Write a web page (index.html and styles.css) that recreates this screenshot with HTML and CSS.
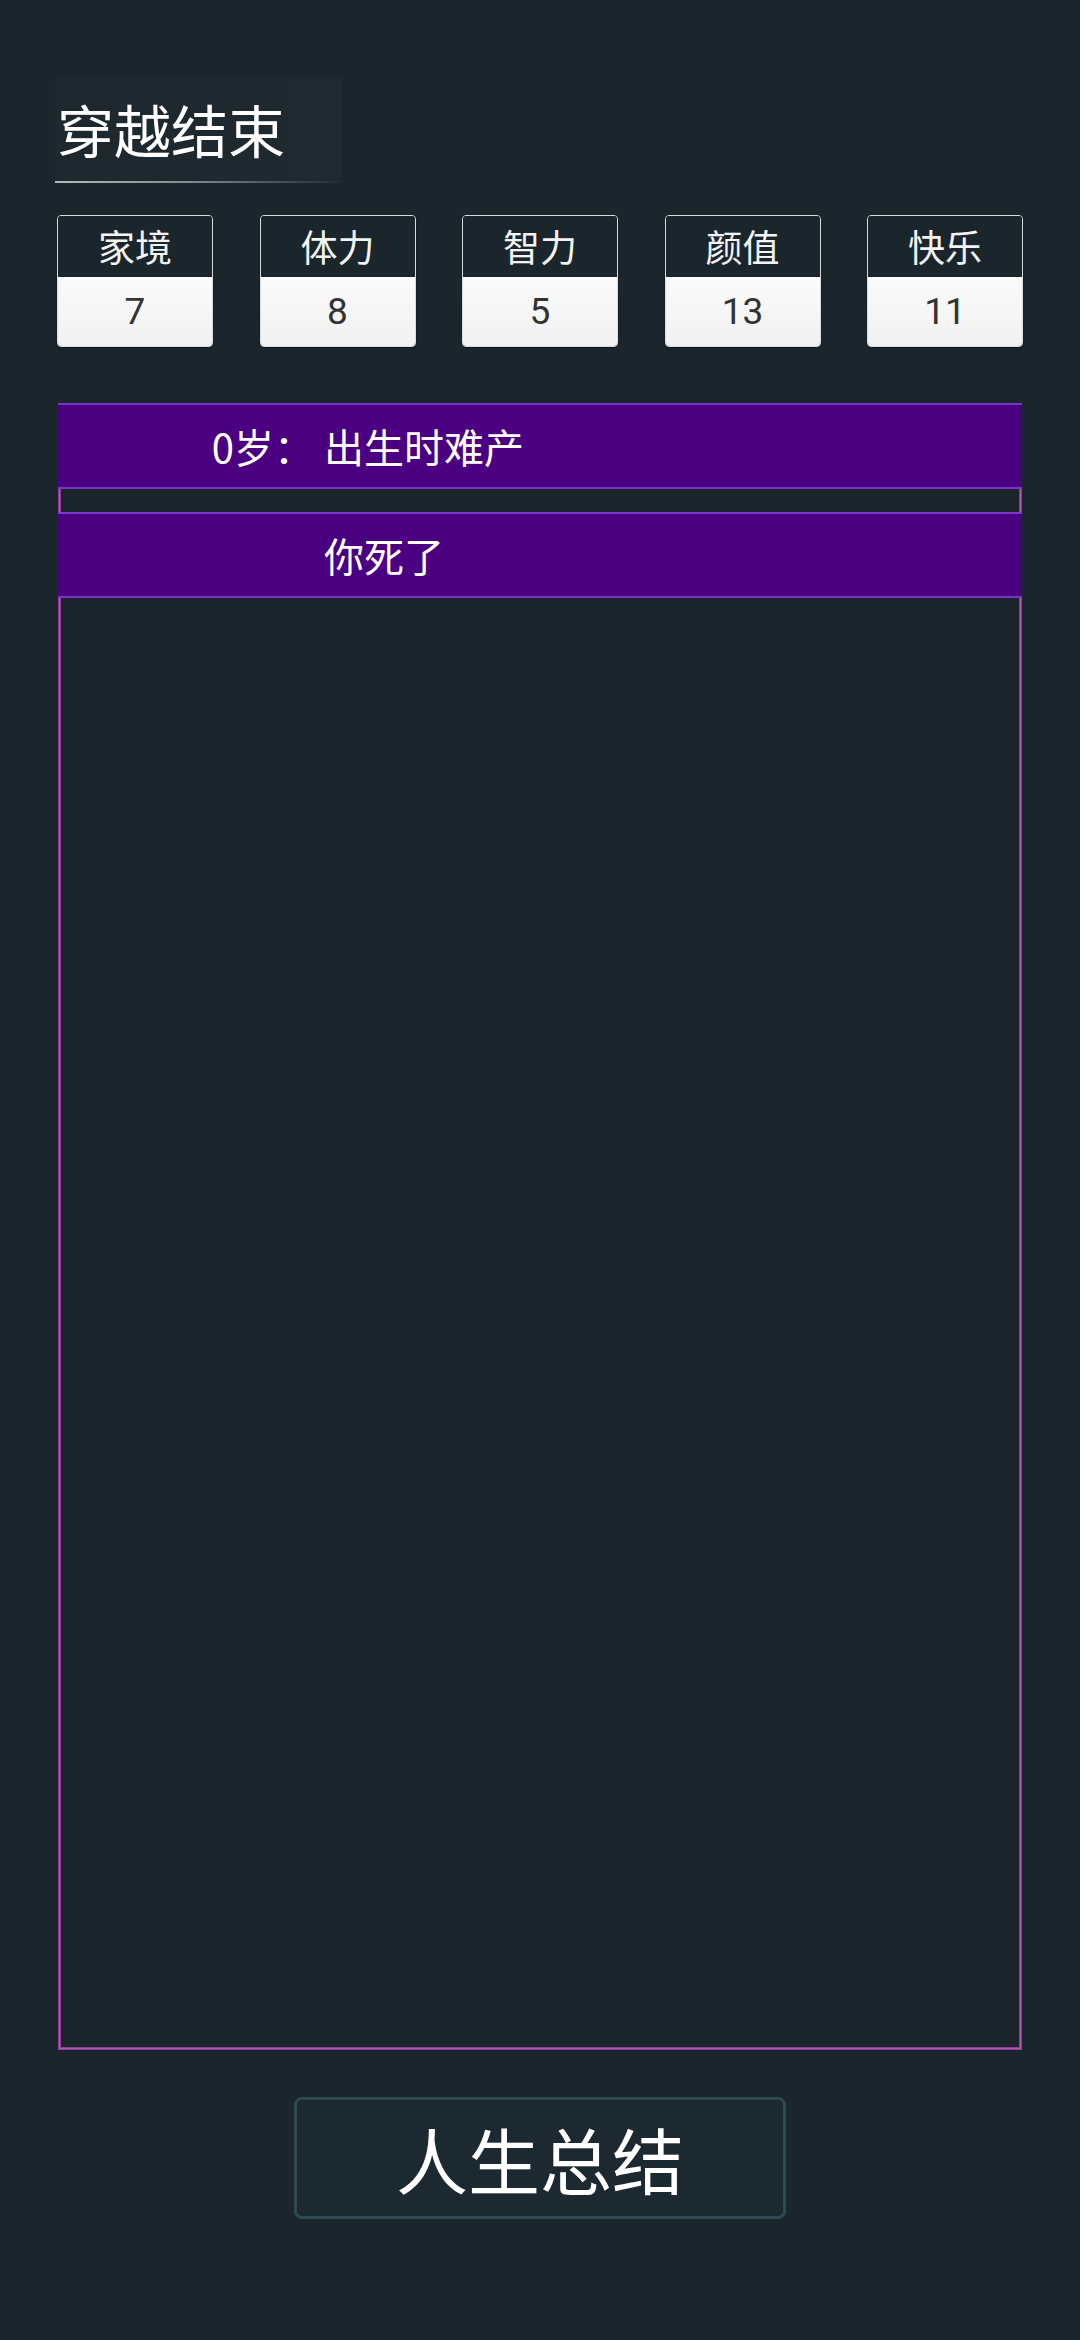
FILE: index.html
```html
<!DOCTYPE html>
<html lang="zh-CN">
<head>
<meta charset="utf-8">
<title>穿越结束</title>
<link rel="stylesheet" href="styles.css">
</head>
<body>
<div class="page">
  <div class="title-box">
    <h1 class="title">穿越结束</h1>
  </div>

  <div class="stats">
    <div class="stat"><div class="stat-label">家境</div><div class="stat-value">7</div></div>
    <div class="stat"><div class="stat-label">体力</div><div class="stat-value">8</div></div>
    <div class="stat"><div class="stat-label">智力</div><div class="stat-value">5</div></div>
    <div class="stat"><div class="stat-label">颜值</div><div class="stat-value">13</div></div>
    <div class="stat"><div class="stat-label">快乐</div><div class="stat-value">11</div></div>
  </div>

  <div class="events">
    <div class="event"><span class="age">0岁：</span><span class="text">出生时难产</span></div>
    <div class="event"><span class="age"></span><span class="text">你死了</span></div>
  </div>

  <div class="actions">
    <button class="summary-btn">人生总结</button>
  </div>
</div>
</body>
</html>
```

FILE: styles.css
```css
* { box-sizing: border-box; }

html, body {
  margin: 0;
  padding: 0;
  background: #1b252c;
}

body {
  width: 1080px;
  height: 2340px;
  font-family: "Noto Sans CJK SC", "Noto Sans", sans-serif;
  color: #ffffff;
}

.page {
  padding: 76px 57px 0 57px;
}

.title-box {
  width: 288px;
  margin-left: -2px;
  background: linear-gradient(90deg, rgba(255,255,255,0.012), rgba(255,255,255,0.02));
}

.title {
  margin: 0;
  padding: 12px 0 0 2px;
  font-size: 57px;
  font-weight: 400;
  line-height: 80px;
  color: #ffffff;
  letter-spacing: 0;
}

.title-box::after {
  content: "";
  display: block;
  height: 2px;
  margin-top: 13px;
  background: linear-gradient(90deg, #b4b9be 0%, #7d858c 50%, rgba(90,100,108,0) 100%);
}

.stats {
  margin-top: 32px;
  display: flex;
  justify-content: space-between;
}

.stat {
  width: 156px;
  border: 1px solid #d9dcde;
  border-radius: 4px;
  overflow: hidden;
  box-shadow: 0 1px 2px rgba(0,0,0,0.4);
}

.stat-label {
  height: 61px;
  background: #1b252c;
  font-size: 37px;
  line-height: 60px;
  text-align: center;
  color: #f4f4f4;
}

.stat-value {
  height: 69px;
  background: linear-gradient(180deg, #fbfbfb 0%, #f1f1f1 100%);
  font-family: "Roboto", "Liberation Sans", sans-serif;
  font-size: 37px;
  line-height: 69px;
  text-align: center;
  color: #333333;
}

.events {
  margin: 56px 1px 0 1px;
  height: 1647px;
  box-shadow: inset 0 0 0 1px #8e3c98, inset 0 0 0 2px #b058b4, inset 0 0 0 3px #8e3c98;
  display: flex;
  flex-direction: column;
  gap: 23px;
}

.event {
  height: 86px;
  background: #4b0082;
  border-top: 2px solid #7a35c9;
  border-bottom: 2px solid #7a35c9;
  display: grid;
  grid-template-columns: 266px 1fr;
  align-items: center;
  font-size: 40px;
  line-height: 82px;
  color: #ffffff;
}

.age {
  text-align: right;
  padding-right: 10px;
}

.text {
  white-space: nowrap;
}

.actions {
  display: flex;
  justify-content: center;
  margin-top: 47px;
}

.summary-btn {
  width: 492px;
  height: 122px;
  border: 3px solid #2c4a50;
  border-radius: 8px;
  background: #1c2930;
  color: #ffffff;
  font-family: "Noto Sans CJK SC", "Noto Sans", sans-serif;
  font-size: 72px;
  line-height: 110px;
  padding: 0;
  text-align: center;
}
```
